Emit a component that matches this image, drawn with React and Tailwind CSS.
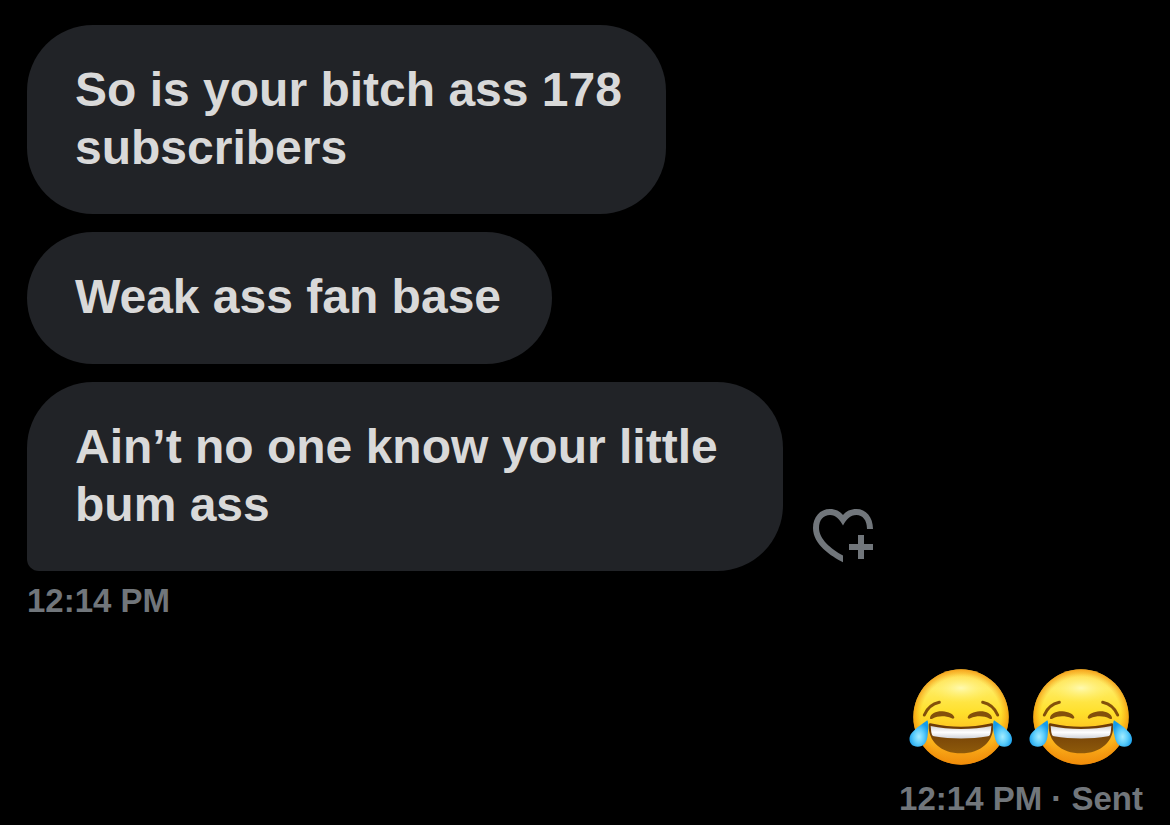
import React from 'react';

const messages = [
  {
    id: 1,
    lines: ['So is your bitch ass 178', 'subscribers'],
    shape: 'w-[639px] rounded-[66px]'
  },
  {
    id: 2,
    lines: ['Weak ass fan base'],
    shape: 'w-[525px] rounded-[66px]'
  },
  {
    id: 3,
    lines: ['Ain’t no one know your little', 'bum ass'],
    shape: 'w-[756px] rounded-[66px] rounded-bl-[12px]',
    canReact: true
  }
];

const HeartPlusIcon = () => (
  <svg viewBox="12 13 62 56" className="w-[62px] h-14" fill="currentColor" aria-hidden="true">
    <path d="M43 67.3C31 61 13 49.5 13 33C13 22 20 14 30 14C35.5 14 40 16.3 43 20C46 16.3 50.5 14 56.5 14C66 14 73 22 73 34H67C67 25 62.5 20 56.5 20C50 20 46.5 24.5 43 30.5C39.5 24.5 36 20 30 20C23.5 20 19 25 19 33C19 44 31 54 43 60.5Z" />
    <path d="M58 40H64V49H73V55H64V64H58V55H49V49H58Z" />
  </svg>
);

const JoyEmoji = ({ id }) => (
  <svg viewBox="42 41 312 288" className="w-[104px] h-24" role="img" aria-label="Face with tears of joy">
    <defs>
      <linearGradient id={`${id}-face`} x1="0" y1="0" x2="0" y2="1">
        <stop offset="0" stopColor="#ffd64a" />
        <stop offset="0.2" stopColor="#ffec62" />
        <stop offset="0.45" stopColor="#ffe02c" />
        <stop offset="0.72" stopColor="#fdb81d" />
        <stop offset="1" stopColor="#f08c0c" />
      </linearGradient>
      <radialGradient id={`${id}-rim`}>
        <stop offset="0.84" stopColor="#f39a10" stopOpacity="0" />
        <stop offset="1" stopColor="#f18d08" stopOpacity="0.7" />
      </radialGradient>
      <radialGradient id={`${id}-shine`}>
        <stop offset="0" stopColor="#fffbb8" stopOpacity="0.9" />
        <stop offset="1" stopColor="#fff06a" stopOpacity="0" />
      </radialGradient>
      <linearGradient id={`${id}-mouth`} x1="0" y1="0" x2="0" y2="1">
        <stop offset="0" stopColor="#6b3806" />
        <stop offset="1" stopColor="#8e5a0a" />
      </linearGradient>
      <linearGradient id={`${id}-teeth`} x1="0" y1="0" x2="0" y2="1">
        <stop offset="0" stopColor="#d3d1d3" />
        <stop offset="0.5" stopColor="#ffffff" />
        <stop offset="1" stopColor="#d0d2d8" />
      </linearGradient>
      <radialGradient id={`${id}-tear`} cx="0.5" cy="0.62" r="0.55">
        <stop offset="0" stopColor="#a4ecff" />
        <stop offset="0.5" stopColor="#5bcdfb" />
        <stop offset="1" stopColor="#159be9" />
      </radialGradient>
    </defs>
    <circle cx="198" cy="185" r="143" fill={`url(#${id}-face)`} />
    <circle cx="198" cy="185" r="143" fill={`url(#${id}-rim)`} />
    <ellipse cx="198" cy="98" rx="96" ry="44" fill={`url(#${id}-shine)`} />
    <g fill="none" stroke="#83500b" strokeLinecap="round">
      <path d="M88 179C96 160 110 146 133 141" strokeWidth="9" />
      <path d="M308 179C300 160 286 146 263 141" strokeWidth="9" />
    </g>
    <g fill="#83500b">
      <path d="M105 187C107 175 124 167 142 168C160 169 176 177 178 186C178 190 174 191 170 189C150 181 131 181 112 190C108 192 104 191 105 187Z" />
      <path d="M291 187C289 175 272 167 254 168C236 169 220 177 218 186C218 190 222 191 226 189C246 181 265 181 284 190C288 192 292 191 291 187Z" />
    </g>
    <path d="M101 208C102 202 108 203 114 205C166 217 230 217 282 205C288 203 294 202 295 208C297 257 258 294 198 294C138 294 99 257 101 208Z" fill={`url(#${id}-mouth)`} />
    <path d="M107 212C160 224 236 224 289 212C288 220 288 229 286 235C285 240 283 242 279 243C226 252 170 252 117 243C113 242 111 240 110 235C108 229 108 220 107 212Z" fill={`url(#${id}-teeth)`} />
    <path d="M97 195C101 201 100 222 98 239C96 262 86 274 68 274C50 274 41 261 44 245C48 227 83 205 97 195Z" fill={`url(#${id}-tear)`} />
    <path d="M297 195C293 201 294 222 298 239C302 262 310 274 328 274C346 274 354 261 350 245C346 227 312 205 297 195Z" fill={`url(#${id}-tear)`} />
  </svg>
);

const Bubble = ({ message }) => (
  <li className="flex items-end gap-[29px]">
    <p className={`min-h-[132px] max-w-full bg-[#212327] px-12 pt-9 pb-[37px] text-[48px] leading-[58px] font-bold text-[#d9d9d9] ${message.shape}`}>
      {message.lines.map(line => (
        <span key={line} className="block whitespace-nowrap">{line}</span>
      ))}
    </p>
    {message.canReact && (
      <button type="button" aria-label="Add reaction" className="mb-[7px] text-[#71767b]">
        <HeartPlusIcon />
      </button>
    )}
  </li>
);

const App = () => {
  return (
    <main className="flex min-h-screen flex-col bg-black px-[27px] pt-[25px] font-['Liberation_Sans',Arial,sans-serif]">
      <ul className="flex flex-col gap-[18px]">
        {messages.map(message => (
          <Bubble key={message.id} message={message} />
        ))}
      </ul>
      <time className="mt-2 text-[33px] leading-[44px] font-bold text-[#71767b]">12:14 PM</time>

      <div className="mt-[46px] flex flex-col items-end">
        <div className="mr-[10px] flex gap-4">
          <JoyEmoji id="joy-a" />
          <JoyEmoji id="joy-b" />
        </div>
        <p className="mt-3 text-[33px] leading-[44px] font-bold text-[#71767b]">
          <time>12:14 PM</time> · Sent
        </p>
      </div>
    </main>
  );
};

export default App;
